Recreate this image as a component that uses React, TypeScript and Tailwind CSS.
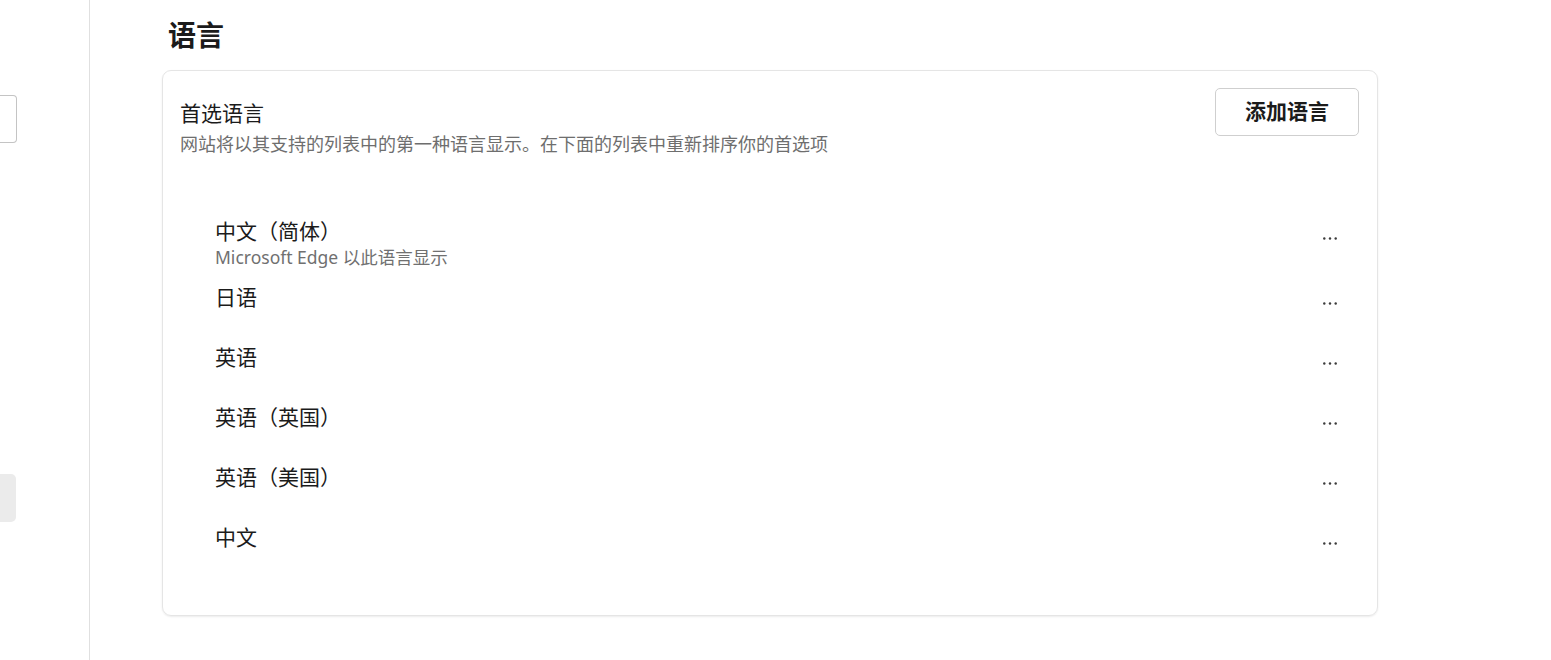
import React from 'react';

const languages = [
  { name: '中文（简体）', note: 'Microsoft Edge 以此语言显示' },
  { name: '日语' },
  { name: '英语' },
  { name: '英语（英国）' },
  { name: '英语（美国）' },
  { name: '中文' },
];

const MoreDots: React.FC = () => (
  <svg width="14" height="3" viewBox="0 0 14 3" className="block">
    <circle cx="1.3" cy="1.5" r="1.2" fill="#3b3b3b" />
    <circle cx="7" cy="1.5" r="1.2" fill="#3b3b3b" />
    <circle cx="12.7" cy="1.5" r="1.2" fill="#3b3b3b" />
  </svg>
);

const LanguageRow: React.FC<{ name: string; note?: string }> = ({ name, note }) => (
  <div className="flex h-[60px] items-start justify-between pl-[34px] pr-[22px]">
    <div className={note ? 'pt-[4px]' : 'pt-[10px]'}>
      <div className="text-[21px] leading-[28px] text-[#1b1b1b]">{name}</div>
      {note && <div className="mt-[1px] text-[17.5px] leading-[22px] text-[#707070]">{note}</div>}
    </div>
    <div className={note ? 'mt-[24px]' : 'mt-[29px]'}>
      <MoreDots />
    </div>
  </div>
);

const App: React.FC = () => {
  return (
    <div
      className="flex h-[660px] w-full overflow-hidden bg-white"
      style={{ fontFamily: '"Noto Sans", "Noto Sans CJK SC", sans-serif' }}
    >
      {/* sidebar, mostly scrolled out of view */}
      <aside className="flex w-[90px] shrink-0 flex-col border-r border-[#e0e0e0]">
        <div className="mt-[95px] h-[48px] w-[17px] rounded-r-[4px] border border-l-0 border-[#c4c4c4]" />
        <div className="mt-[331px] h-[48px] w-[16px] rounded-r-[5px] bg-[#ebebeb]" />
      </aside>

      <main className="flex-1 pl-[72px]">
        <h1 className="mt-[16px] pl-[6px] text-[28px] font-bold leading-[38px] text-[#1b1b1b]">语言</h1>

        <section className="mt-[16px] w-[1216px] rounded-[9px] border border-[#e5e5e5] px-[18px] pb-[42px] pt-[17px] shadow-[0_1px_2px_rgba(0,0,0,0.08)]">
          <div className="flex items-start justify-between">
            <div className="-ml-[1px] pt-[11px]">
              <h2 className="text-[21px] leading-[28px] text-[#1b1b1b]">首选语言</h2>
              <p className="mt-[6px] text-[18px] leading-[22px] text-[#6e6e6e]">
                网站将以其支持的列表中的第一种语言显示。在下面的列表中重新排序你的首选项
              </p>
            </div>
            <button className="h-[48px] w-[144px] rounded-[5px] border border-[#cfcfcf] bg-white text-[21px] font-bold text-[#1b1b1b]">
              添加语言
            </button>
          </div>

          <div className="mt-[58px]">
            {languages.map((l) => (
              <LanguageRow key={l.name} name={l.name} note={l.note} />
            ))}
          </div>
        </section>
      </main>
    </div>
  );
};

export default App;
